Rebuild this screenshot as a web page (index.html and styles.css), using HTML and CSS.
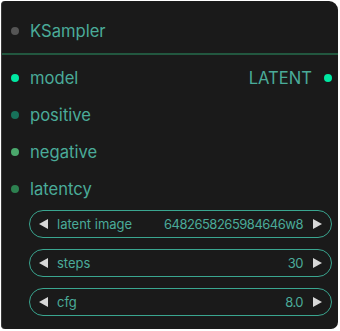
FILE: index.html
```html
<!DOCTYPE html>
<html lang="en">
<head>
  <meta charset="UTF-8">
  <title>KSampler</title>
  <link rel="stylesheet" href="styles.css">
</head>
<body>
  <div class="node">
    <div class="titulo">
      <span class="ponto cinza"></span>
      <span>KSampler</span>
    </div>

    <div class="slots">
      <div class="linha">
        <div class="entrada"><span class="ponto modelo"></span>model</div>
        <div class="saida">LATENT<span class="ponto modelo"></span></div>
      </div>
      <div class="linha">
        <div class="entrada"><span class="ponto positivo"></span>positive</div>
      </div>
      <div class="linha">
        <div class="entrada"><span class="ponto negativo"></span>negative</div>
      </div>
      <div class="linha">
        <div class="entrada"><span class="ponto latente"></span>latentcy</div>
      </div>
    </div>

    <div class="widgets">
      <div class="widget">
        <svg class="seta" width="9" height="10" viewBox="0 0 9 10"><polygon points="9,0 9,10 0,5"/></svg>
        <span class="nome">latent image</span>
        <span class="valor">6482658265984646w8</span>
        <svg class="seta" width="9" height="10" viewBox="0 0 9 10"><polygon points="0,0 9,5 0,10"/></svg>
      </div>
      <div class="widget">
        <svg class="seta" width="9" height="10" viewBox="0 0 9 10"><polygon points="9,0 9,10 0,5"/></svg>
        <span class="nome">steps</span>
        <span class="valor">30</span>
        <svg class="seta" width="9" height="10" viewBox="0 0 9 10"><polygon points="0,0 9,5 0,10"/></svg>
      </div>
      <div class="widget">
        <svg class="seta" width="9" height="10" viewBox="0 0 9 10"><polygon points="9,0 9,10 0,5"/></svg>
        <span class="nome">cfg</span>
        <span class="valor">8.0</span>
        <svg class="seta" width="9" height="10" viewBox="0 0 9 10"><polygon points="0,0 9,5 0,10"/></svg>
      </div>
    </div>
  </div>
</body>
</html>
```

FILE: styles.css
```css
* {
  box-sizing: border-box;
  margin: 0;
  padding: 0;
}

body {
  background: #fff;
  font-family: Inter, "Noto Sans", sans-serif;
  padding: 1px;
}

.node {
  width: 337px;
  height: 328px;
  background: #1a1a1a;
  border-left: 1px solid #3a3a3a;
  border-radius: 4px 9px 7px 4px;
  color: #4aab99;
  font-size: 16.6px;
}

.titulo {
  display: flex;
  align-items: center;
  gap: 11px;
  height: 54px;
  padding: 8px 0 0 9px;
  border-bottom: 2px solid #22573f;
}

.ponto {
  width: 8px;
  height: 8px;
  border-radius: 50%;
  flex-shrink: 0;
}

.cinza { background: #555; }
.modelo { background: #00e8a2; }
.positivo { background: #17715a; }
.negativo { background: #4ba86c; }
.latente { background: #2d8150; }

.slots {
  padding-top: 4px;
}

.linha {
  display: flex;
  justify-content: space-between;
  align-items: center;
  height: 37px;
}

.entrada {
  display: flex;
  align-items: center;
  gap: 11px;
  padding-left: 9px;
}

.saida {
  display: flex;
  align-items: center;
  gap: 12px;
  padding-right: 6px;
}

.widgets {
  display: flex;
  flex-direction: column;
  gap: 11px;
  padding: 3px 6px 0 27px;
}

.widget {
  display: flex;
  align-items: center;
  height: 28px;
  border: 1.5px solid #3aa690;
  border-radius: 14px;
  padding: 0 9px 0 9px;
  font-size: 13px;
}

.seta {
  fill: #d8d8d8;
  flex-shrink: 0;
}

.nome {
  margin-left: 9px;
  flex: 1;
}

.valor {
  margin-right: 10px;
  letter-spacing: -0.5px;
}
```
